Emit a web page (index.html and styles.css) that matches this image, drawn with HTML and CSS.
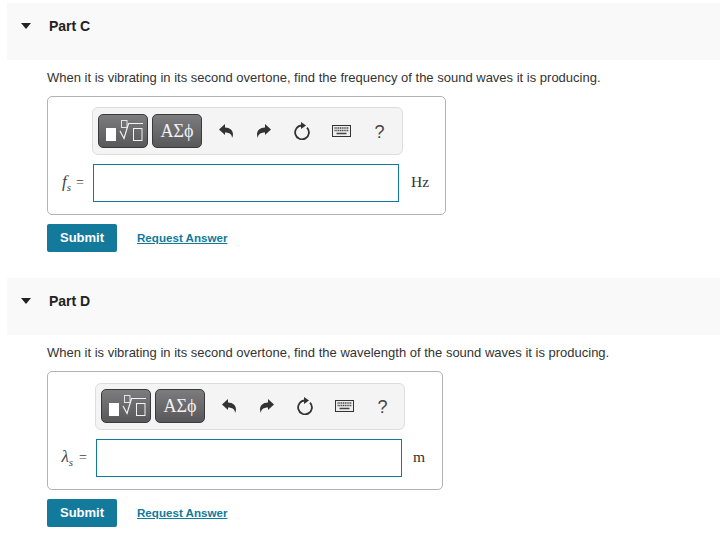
FILE: index.html
```html
<!DOCTYPE html>
<html lang="en">
<head>
  <meta charset="UTF-8">
  <title>Part C and Part D</title>
  <link rel="stylesheet" href="styles.css">
</head>
<body>

  <section class="part part-c">
    <div class="part-header">
      <span class="caret"></span>
      <h3>Part C</h3>
    </div>
    <div class="part-body">
      <p class="question">When it is vibrating in its second overtone, find the frequency of the sound waves it is producing.</p>
      <div class="answer-box">
        <div class="toolbar">
          <button class="tool-btn" type="button">
            <svg width="48" height="32" viewBox="0 0 48 32"><rect x="7" y="13" width="10" height="13" fill="#fff"/><rect x="22.500" y="5.500" width="5.500" height="7" fill="none" stroke="#e4e4e4"/><path d="M21 16l4 7.500 4.500-15H44" fill="none" stroke="#f2f2f2" stroke-width="1.200"/><rect x="34.500" y="13.500" width="8.500" height="12" fill="none" stroke="#f2f2f2"/></svg>
          </button>
          <button class="tool-btn greek" type="button">ΑΣϕ</button>
          <span class="tool-icon"><svg width="14" height="14" viewBox="0 0 14 14"><path d="M0 5.500L6 0v3.400c5 0 8 3 8 7.100 0 1.300-.3 2.500-1 3.500.2-3.300-2.300-5.400-7-5.400V11z" fill="#333"/></svg></span>
          <span class="tool-icon"><svg width="14" height="14" viewBox="0 0 14 14"><path d="M14 5.500L8 0v3.400c-5 0-8 3-8 7.100 0 1.300.3 2.500 1 3.500-.2-3.300 2.300-5.400 7-5.400V11z" fill="#333"/></svg></span>
          <span class="tool-icon"><svg width="16" height="18" viewBox="0 0 16 18"><path d="M8 3.500a6.900 6.900 0 1 0 5 2.100" fill="none" stroke="#333" stroke-width="1.800"/><path d="M7 0l5 3.500-5 3.500z" fill="#333"/></svg></span>
          <span class="tool-icon keyboard"><svg width="19" height="12" viewBox="0 0 19 12"><rect x=".5" y=".5" width="18" height="11" fill="#eee" stroke="#333"/><path d="M2.500 3h14M2.500 5.500h14" stroke="#444" stroke-width="1.300" stroke-dasharray="1.200 .6"/><path d="M4.500 8.500h10" stroke="#444" stroke-width="1.500"/></svg></span>
          <span class="tool-icon help">?</span>
        </div>
        <label class="math-label" for="fs"><i>f<sub>s</sub></i><span class="eq">=</span></label>
        <input class="math-input" type="text" id="fs">
        <span class="unit">Hz</span>
      </div>
      <div class="actions">
        <button class="submit" type="button">Submit</button>
        <a class="request" href="#">Request Answer</a>
      </div>
    </div>
  </section>

  <section class="part part-d">
    <div class="part-header">
      <span class="caret"></span>
      <h3>Part D</h3>
    </div>
    <div class="part-body">
      <p class="question">When it is vibrating in its second overtone, find the wavelength of the sound waves it is producing.</p>
      <div class="answer-box">
        <div class="toolbar">
          <button class="tool-btn" type="button">
            <svg width="48" height="32" viewBox="0 0 48 32"><rect x="7" y="13" width="10" height="13" fill="#fff"/><rect x="22.500" y="5.500" width="5.500" height="7" fill="none" stroke="#e4e4e4"/><path d="M21 16l4 7.500 4.500-15H44" fill="none" stroke="#f2f2f2" stroke-width="1.200"/><rect x="34.500" y="13.500" width="8.500" height="12" fill="none" stroke="#f2f2f2"/></svg>
          </button>
          <button class="tool-btn greek" type="button">ΑΣϕ</button>
          <span class="tool-icon"><svg width="14" height="14" viewBox="0 0 14 14"><path d="M0 5.500L6 0v3.400c5 0 8 3 8 7.100 0 1.300-.3 2.500-1 3.500.2-3.300-2.300-5.400-7-5.400V11z" fill="#333"/></svg></span>
          <span class="tool-icon"><svg width="14" height="14" viewBox="0 0 14 14"><path d="M14 5.500L8 0v3.400c-5 0-8 3-8 7.100 0 1.300.3 2.500 1 3.500-.2-3.300 2.300-5.400 7-5.400V11z" fill="#333"/></svg></span>
          <span class="tool-icon"><svg width="16" height="18" viewBox="0 0 16 18"><path d="M8 3.500a6.900 6.900 0 1 0 5 2.100" fill="none" stroke="#333" stroke-width="1.800"/><path d="M7 0l5 3.500-5 3.500z" fill="#333"/></svg></span>
          <span class="tool-icon keyboard"><svg width="19" height="12" viewBox="0 0 19 12"><rect x=".5" y=".5" width="18" height="11" fill="#eee" stroke="#333"/><path d="M2.500 3h14M2.500 5.500h14" stroke="#444" stroke-width="1.300" stroke-dasharray="1.200 .6"/><path d="M4.500 8.500h10" stroke="#444" stroke-width="1.500"/></svg></span>
          <span class="tool-icon help">?</span>
        </div>
        <label class="math-label" for="ls"><i>λ<sub>s</sub></i><span class="eq">=</span></label>
        <input class="math-input" type="text" id="ls">
        <span class="unit">m</span>
      </div>
      <div class="actions">
        <button class="submit" type="button">Submit</button>
        <a class="request" href="#">Request Answer</a>
      </div>
    </div>
  </section>

</body>
</html>
```

FILE: styles.css
```css
body {
  font-family: "Liberation Sans", Arial, sans-serif;
  background-color: white;
  color: #333;
  margin: 0;
  padding: 3px 0 0 7px;
}

.part-header {
  display: flex;
  align-items: flex-start;
  height: 57px;
  padding-left: 14px;
  background-color: #f9f9f9;
}

.caret {
  width: 0;
  height: 0;
  margin-top: 20px;
  border-left: 5.5px solid transparent;
  border-right: 5.5px solid transparent;
  border-top: 6px solid #222;
}

h3 {
  margin: 15px 0 0 18px;
  font-size: 14px;
  line-height: 16px;
  font-weight: bold;
  color: #222;
}

.part-body {
  padding-left: 40px;
}

.question {
  margin: 0;
  padding-top: 9px;
  font-size: 13px;
  line-height: 17px;
  color: #333;
}

.answer-box {
  display: grid;
  align-items: center;
  width: 399px;
  box-sizing: border-box;
  margin-top: 10px;
  padding: 10px 0 12px;
  border: 1px solid #b3b3b3;
  border-radius: 5px;
  grid-template-columns: 45px 306px 1fr;
  row-gap: 9px;
}

.part-d {
  margin-top: 26px;
}

.part-d .answer-box {
  width: 396px;
  padding-top: 11px;
  grid-template-columns: 48px 306px 1fr;
}

.toolbar {
  grid-column: 1 / -1;
  display: flex;
  align-items: center;
  justify-self: start;
  box-sizing: border-box;
  width: 311px;
  margin-left: 44px;
  padding: 6px 5px;
  background-color: #f4f4f4;
  border: 1px solid #ddd;
  border-radius: 6px;
}

.part-d .toolbar {
  width: 310px;
  margin-left: 47px;
  padding: 5px 4px 6px 5px;
}

.tool-btn {
  display: flex;
  flex: none;
  align-items: center;
  justify-content: center;
  width: 50px;
  height: 34px;
  margin-right: 4px;
  padding: 0;
  background: linear-gradient(#7c7c7e, #58585a);
  border: 1px solid #3a3a3a;
  border-radius: 5px;
}

.greek {
  margin-right: 5px;
  color: #f2f2f2;
  font-family: "Liberation Serif", serif;
  font-size: 18px;
}

.tool-icon {
  display: flex;
  align-items: center;
  justify-content: center;
  width: 38px;
  height: 34px;
  flex: none;
}

.keyboard {
  padding-left: 2px;
  box-sizing: border-box;
}

.help {
  box-sizing: border-box;
  padding: 2px 0 0 3px;
  font-size: 18px;
  color: #444;
}

.math-label {
  padding: 0 9px 2px 0;
  text-align: right;
  font-family: "Liberation Serif", serif;
  font-size: 14px;
  color: #444;
  white-space: nowrap;
}

.math-label i {
  font-size: 17px;
}

.math-label sub {
  font-size: 11px;
  line-height: 0;
}

.eq {
  margin-left: 5px;
}

.part-d .eq {
  margin-left: 6px;
}

.math-input {
  box-sizing: border-box;
  height: 38px;
  border: 1px solid #0f7a9b;
  border-radius: 0;
  background-color: white;
}

.unit {
  padding: 0 0 2px 12px;
  font-family: "Liberation Serif", serif;
  font-size: 15.5px;
  color: #333;
}

.part-d .unit {
  padding-left: 11px;
}

.actions {
  display: flex;
  align-items: center;
  gap: 20px;
  margin-top: 9px;
}

.submit {
  width: 70px;
  height: 28px;
  padding: 0 0 1px;
  background-color: #147a9c;
  color: white;
  border: none;
  border-radius: 2px;
  font-family: "Liberation Sans", Arial, sans-serif;
  font-size: 13px;
  font-weight: bold;
}

.request {
  margin-bottom: 2px;
  color: #0f7a9b;
  font-size: 11.6px;
  font-weight: bold;
}
```
